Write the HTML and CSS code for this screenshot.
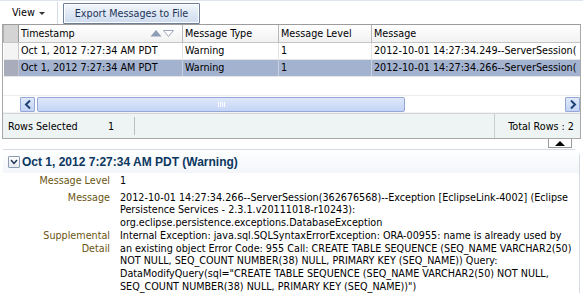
FILE: index.html
```html
<!DOCTYPE html>
<html>
<head>
<meta charset="utf-8">
<link rel="stylesheet" href="styles.css">
</head>
<body>
<div class="toolbar">
  <div class="view-menu">View <span class="caret"></span></div>
  <div class="tb-sep"></div>
  <button class="btn">Export Messages to File</button>
</div>
<div class="grid">
  <div class="tbl-wrap">
    <table class="tbl">
      <colgroup><col class="c-sel"><col class="c-ts"><col class="c-type"><col class="c-level"><col class="c-msg"></colgroup>
      <thead>
        <tr>
          <th class="sel"></th>
          <th><span class="th-in">Timestamp<span class="sort"><svg width="24" height="8" viewBox="0 0 24 8"><path d="M0.5 7.5 L6 1 L11.5 7.5 Z" fill="#8e9cb4"/><path d="M13.5 1.5 L23.5 1.5 L18.5 7.5 Z" fill="#fff" stroke="#9aa6bb" stroke-width="1"/></svg></span></span></th>
          <th>Message Type</th>
          <th>Message Level</th>
          <th>Message</th>
        </tr>
      </thead>
      <tbody>
        <tr>
          <td class="sel"></td>
          <td>Oct 1, 2012 7:27:34 AM PDT</td>
          <td>Warning</td>
          <td>1</td>
          <td>2012-10-01 14:27:34.249--ServerSession(</td>
        </tr>
        <tr class="selected">
          <td class="sel"></td>
          <td>Oct 1, 2012 7:27:34 AM PDT</td>
          <td>Warning</td>
          <td>1</td>
          <td>2012-10-01 14:27:34.266--ServerSession(</td>
        </tr>
      </tbody>
    </table>
  </div>
  <div class="hscroll">
    <div class="sb-btn"><svg width="8" height="9" viewBox="0 0 8 9"><path d="M6 0.5 L2 4.5 L6 8.5" fill="none" stroke="#1d3f7a" stroke-width="2"/></svg></div>
    <div class="sb-thumb"><span class="grip"></span></div>
    <div class="sb-track"></div>
    <div class="sb-btn"><svg width="8" height="9" viewBox="0 0 8 9"><path d="M2 0.5 L6 4.5 L2 8.5" fill="none" stroke="#1d3f7a" stroke-width="2"/></svg></div>
  </div>
  <div class="footer">
    <div class="f-left"><span class="f-label">Rows Selected</span><span class="f-val">1</span></div>
    <div class="f-right">Total Rows : 2</div>
  </div>
</div>
<div class="splitter"><div class="split-btn"><svg width="10" height="5" viewBox="0 0 10 5"><path d="M0 5 L5 0 L10 5 Z" fill="#000"/></svg></div></div>
<div class="detail">
  <div class="detail-head">
    <span class="disclose"><svg width="8" height="6" viewBox="0 0 8 6"><path d="M1 1 L4 4.5 L7 1" fill="none" stroke="#1b2f4f" stroke-width="1.4"/></svg></span>
    <span class="detail-title">Oct 1, 2012 7:27:34 AM PDT (Warning)</span>
  </div>
  <div class="detail-body">
    <div class="lbl first">Message Level</div>
    <div class="val first">1</div>
    <div class="lbl">Message</div>
    <div class="val">2012-10-01 14:27:34.266--ServerSession(362676568)--Exception [EclipseLink-4002] (Eclipse<br>Persistence Services - 2.3.1.v20111018-r10243):<br>org.eclipse.persistence.exceptions.DatabaseException</div>
    <div class="lbl">Supplemental<br>Detail</div>
    <div class="val">Internal Exception: java.sql.SQLSyntaxErrorException: ORA-00955: name is already used by<br>an existing object Error Code: 955 Call: CREATE TABLE SEQUENCE (SEQ_NAME VARCHAR2(50)<br>NOT NULL, SEQ_COUNT NUMBER(38) NULL, PRIMARY KEY (SEQ_NAME)) Query:<br>DataModifyQuery(sql="CREATE TABLE SEQUENCE (SEQ_NAME VARCHAR2(50) NOT NULL,<br>SEQ_COUNT NUMBER(38) NULL, PRIMARY KEY (SEQ_NAME))")</div>
  </div>
</div>
</body>
</html>
```
FILE: styles.css
```css
* { box-sizing: border-box; }
html, body { margin: 0; padding: 0; background: #fff; }
body {
  font-family: "DejaVu Sans Condensed", "DejaVu Sans", sans-serif;
  font-size: 10.7px;
  color: #000;
  width: 583px;
  height: 301px;
  overflow: hidden;
}

/* toolbar */
.toolbar {
  height: 24px;
  display: flex;
  align-items: center;
  border-top: 1px solid #dfe5ee;
  padding-left: 12px;
}
.view-menu {
  display: flex;
  align-items: center;
  gap: 4px;
  color: #000;
  width: 40px;
}
.caret {
  width: 0; height: 0;
  border-left: 3px solid transparent;
  border-right: 3px solid transparent;
  border-top: 3px solid #333;
  margin-top: 1px;
}
.tb-sep {
  width: 1px;
  height: 22px;
  background: #d6dbe3;
  margin-left: 5px;
  margin-right: 5px;
}
.btn {
  font-family: inherit;
  font-size: 10.7px;
  color: #1c3457;
  height: 21px;
  width: 137px;
  padding: 0;
  margin-top: 1px;
  border: 1px solid #6f7f98;
  border-radius: 1px;
  background: linear-gradient(#f4f7fc, #dbe5f3 60%, #cfdcee);
  box-shadow: inset 0 0 0 1px #fbfdff;
}

/* grid */
.grid {
  margin-left: 2px;
  width: 579px;
  border: 1px solid #a8a8a8;
  border-top: 1px solid #9c9c9c;
}
.tbl-wrap {
  overflow: hidden;
  height: 70px;
}
.tbl {
  border-collapse: collapse;
  table-layout: fixed;
  width: 680px;
}
.c-sel { width: 15px; }
.c-ts { width: 164px; }
.c-type { width: 96px; }
.c-level { width: 93px; }
.c-msg { width: 312px; }
.tbl th {
  height: 17px;
  font-weight: normal;
  text-align: left;
  padding: 0 0 0 2px;
  white-space: nowrap;
  background: linear-gradient(#ffffff, #f1f1f1);
  border-right: 1px solid #b9b9b9;
  border-bottom: 1px solid #c4c4c4;
}
.tbl th.sel {
  background: #d4d4d4;
  border-left: 1px solid #b0b0b0;
  border-right: 1px solid #9a9a9a;
}
.th-in {
  display: flex;
  align-items: center;
  justify-content: space-between;
  padding-right: 8px;
}
.sort { display: flex; }
.tbl td {
  height: 17px;
  padding: 0 0 0 2px;
  white-space: nowrap;
  overflow: hidden;
  border-right: 1px solid #e3e3e3;
  border-bottom: 1px solid #e6e6e6;
}
.tbl td.sel {
  background: #f4f4f4;
  border-right: 1px solid #c8c8c8;
}
.tbl tr.selected td { background: #a3b2cf; border-right-color: #c9d2e3; }
.tbl tr.selected td.sel { background: #a9acbb; border-right-color: #bfc2cc; }

/* horizontal scrollbar */
.hscroll {
  height: 18px;
  display: flex;
  align-items: center;
  padding-left: 17px;
  border-top: 1px solid #ededed;
  border-bottom: 1px solid #f2f2f2;
  background: #fff;
}
.sb-btn {
  width: 15px;
  height: 15px;
  border: 1px solid #93a8d6;
  background: linear-gradient(#e0e9fb, #c3d3f4);
  display: flex;
  align-items: center;
  justify-content: center;
  border-radius: 1px;
}
.sb-thumb {
  width: 368px;
  height: 15px;
  margin-left: 2px;
  border: 1px solid #93a8d6;
  border-radius: 2px;
  background: linear-gradient(#dfe8fb, #c4d4f6);
  display: flex;
  align-items: center;
  justify-content: center;
}
.grip {
  width: 7px;
  height: 5px;
  background: repeating-linear-gradient(90deg, #ffffff 0 1px, transparent 1px 2px);
}
.sb-track { flex: 1; height: 15px; }

.footer {
  height: 25px;
  display: flex;
  align-items: stretch;
  background: #eef4f3;
  border-top: 1px solid #d2d6d6;
}
.f-left {
  display: flex;
  align-items: center;
  padding-left: 5px;
  width: 132px;
  border-right: 1px solid #b8bec2;
  margin: 3px 0;
}
.f-label { width: 100px; }
.f-right {
  margin-left: auto;
  display: flex;
  align-items: center;
  padding: 0 6px;
  width: 86px;
  justify-content: flex-end;
  border-left: 1px solid #c8cfd2;
}

/* splitter */
.splitter {
  height: 10px;
  display: flex;
  justify-content: flex-end;
  padding-right: 11px;
}
.split-btn {
  width: 24px;
  height: 9px;
  background: #fff;
  border: 1px solid #9a9a9a;
  border-top: none;
  display: flex;
  align-items: center;
  justify-content: center;
}

/* detail panel */
.detail {
  margin-left: 3px;
  width: 577px;
  border-top: 1px solid #d3dae4;
  border-right: 1px solid #d3dae4;
  border-top-right-radius: 7px;
}
.detail-head {
  height: 23px;
  display: flex;
  align-items: center;
  padding-left: 5px;
  gap: 2px;
  background: linear-gradient(#ffffff, #f3f6fa);
}
.disclose {
  width: 12px;
  height: 12px;
  border: 1px solid #8d9bb0;
  border-radius: 1px;
  background: linear-gradient(#ffffff, #e4e9f1);
  display: flex;
  align-items: center;
  justify-content: center;
}
.detail-title {
  font-family: "Liberation Sans", Arial, sans-serif;
  font-weight: bold;
  font-size: 12px;
  color: #0b3761;
}
.detail-body {
  display: grid;
  grid-template-columns: 107px 1fr;
  column-gap: 10px;
  padding-top: 2px;
  line-height: 12.7px;
}
.lbl {
  text-align: right;
  color: #6b5512;
}
.first { margin-bottom: 4px; }
.val { white-space: nowrap; color: #000; }
```
